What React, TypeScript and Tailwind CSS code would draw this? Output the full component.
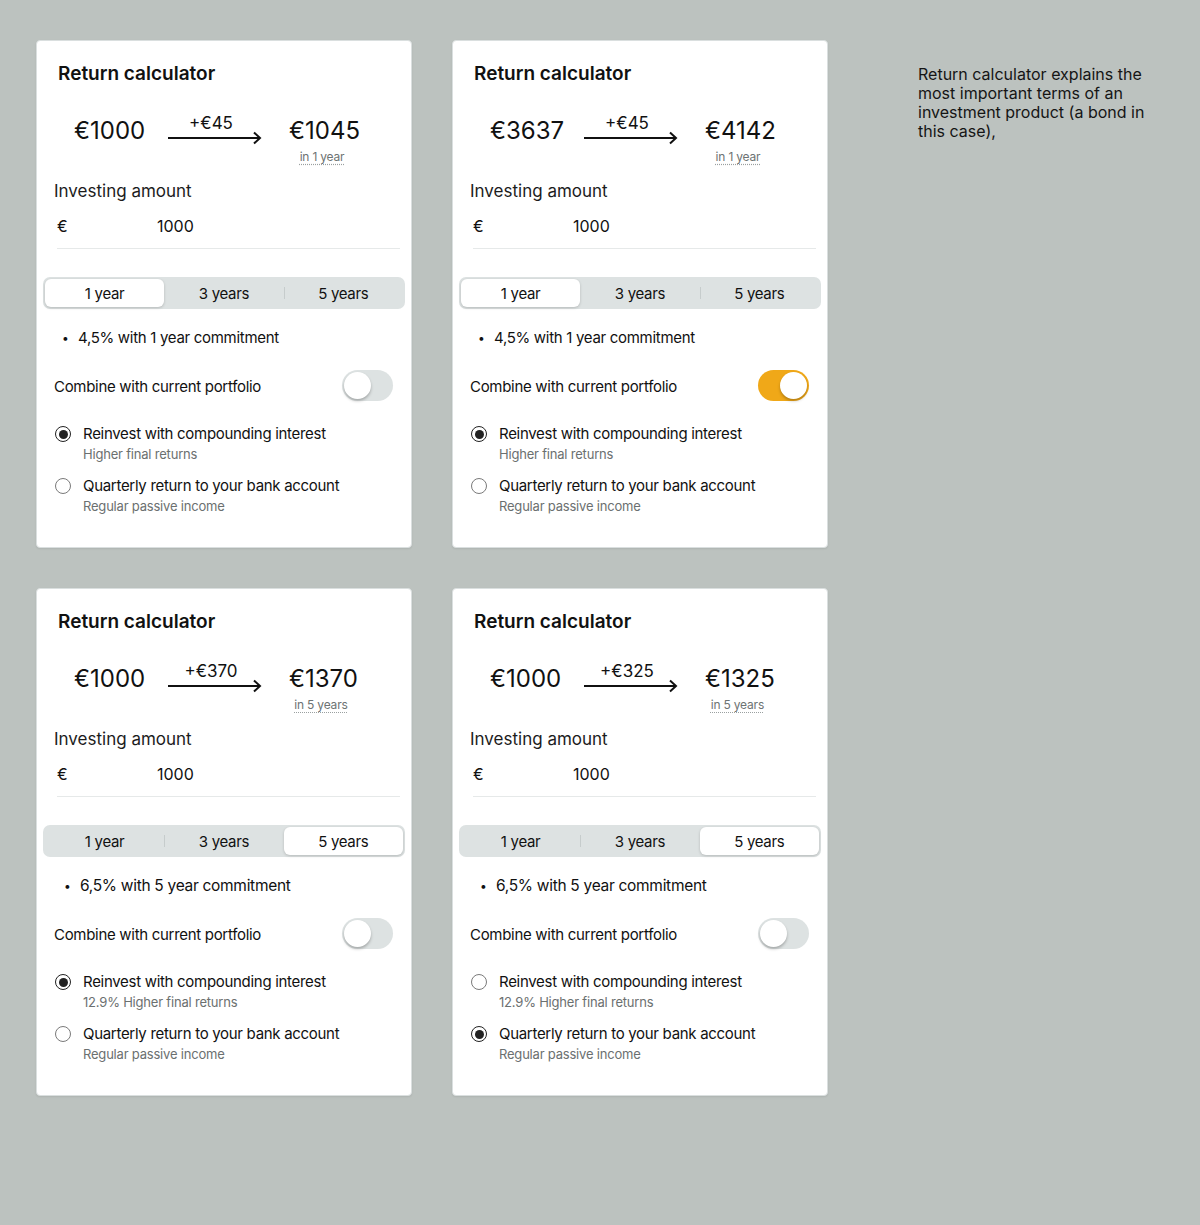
import React from "react";

type Card = {
  from: string;
  gain: string;
  to: string;
  period: string;
  tab: number;
  rate: string;
  big: boolean;
  combine: boolean;
  reinvestNote: string;
  reinvest: boolean;
};

const cards: Card[] = [
  { from: "€1000", gain: "+€45", to: "€1045", period: "in 1 year", tab: 0, rate: "4,5% with 1 year commitment", big: false, combine: false, reinvestNote: "Higher final returns", reinvest: true },
  { from: "€3637", gain: "+€45", to: "€4142", period: "in 1 year", tab: 0, rate: "4,5% with 1 year commitment", big: false, combine: true, reinvestNote: "Higher final returns", reinvest: true },
  { from: "€1000", gain: "+€370", to: "€1370", period: "in 5 years", tab: 2, rate: "6,5% with 5 year commitment", big: true, combine: false, reinvestNote: "12.9% Higher final returns", reinvest: true },
  { from: "€1000", gain: "+€325", to: "€1325", period: "in 5 years", tab: 2, rate: "6,5% with 5 year commitment", big: true, combine: false, reinvestNote: "12.9% Higher final returns", reinvest: false },
];

const tabs = ["1 year", "3 years", "5 years"];

function Radio({ on }: { on: boolean }) {
  return on ? (
    <div className="flex h-[16px] w-[16px] shrink-0 items-center justify-center rounded-full border-[1.5px] border-[#222]">
      <div className="h-[9px] w-[9px] rounded-full bg-[#222]" />
    </div>
  ) : (
    <div className="h-[16px] w-[16px] shrink-0 rounded-full border border-[#7a7a7a] bg-white" />
  );
}

function Toggle({ on }: { on: boolean }) {
  return (
    <div
      className={
        on
          ? "flex h-[31px] w-[51px] items-center justify-end rounded-full bg-[#f0a818] px-[2px]"
          : "flex h-[31px] w-[51px] items-center justify-start rounded-full bg-[#dde2e2] px-[2px]"
      }
    >
      <div className="h-[27px] w-[27px] rounded-full bg-white shadow-[0_2px_3px_rgba(0,0,0,0.25)]" />
    </div>
  );
}

function Calculator({ c }: { c: Card }) {
  return (
    <div className="flex h-[508px] flex-col rounded-[4px] border border-[#dadfdf] bg-white pl-[17px] pr-[11px] pt-[21px] shadow-[0_1px_2px_rgba(0,0,0,0.08)]">
      <h2 className="pl-[4px] text-[19px] font-semibold leading-[24px] text-[#111]">Return calculator</h2>

      {/* amounts */}
      <div className="mt-[30px] flex items-start pl-[20px]">
        <div className="w-[94px] text-[24px] leading-[30px] text-[#111]">{c.from}</div>
        <div className="flex w-[94px] flex-col items-center">
          <span className="mt-[-2px] pr-[8px] text-[17px] leading-[18px] text-[#111]">{c.gain}</span>
          <svg width="94" height="14" viewBox="0 0 94 14" className="mt-[-1px]">
            <path d="M0 7 H92" stroke="#111" strokeWidth="2" fill="none" />
            <path d="M86 1.5 L92 7 L86 12.5" stroke="#111" strokeWidth="2" fill="none" strokeLinejoin="miter" />
          </svg>
        </div>
        <div className="ml-[27px] flex flex-col items-center">
          <span className="text-[24px] leading-[30px] text-[#111]">{c.to}</span>
          <span className="mr-[5px] mt-[3px] text-[12px] leading-[16px] tracking-[-0.2px] text-[#6d7373] underline decoration-dotted decoration-[#9aa0a0] underline-offset-[3px]">
            {c.period}
          </span>
        </div>
      </div>

      {/* investing amount */}
      <div className="mt-[15px] text-[17px] leading-[22px] text-[#1c1c1c]">Investing amount</div>
      <div className="ml-[3px] mt-[14px] flex border-b border-[#e6e9e9] pb-[12px] text-[16px] leading-[20px] text-[#111]">
        <span className="w-[100px]">€</span>
        <span>1000</span>
      </div>

      {/* period tabs */}
      <div className="-ml-[11px] -mr-[5px] mt-[28px] grid h-[32px] grid-cols-3 rounded-[7px] bg-[#dde2e2] p-[2px]">
        {tabs.map((t, i) => {
          const showSep = i > 0 && c.tab !== i && c.tab !== i - 1;
          return (
            <div key={t} className="relative flex items-center justify-center">
              {showSep && <div className="absolute left-0 top-[8px] h-[12px] w-px bg-[#c6cccc]" />}
              {c.tab === i ? (
                <div className="flex h-full w-full items-center justify-center rounded-[6px] bg-white pt-[2px] text-[15px] tracking-[-0.3px] text-[#111] shadow-[0_1px_3px_rgba(0,0,0,0.18)]">
                  {t}
                </div>
              ) : (
                <span className="pt-[2px] text-[15px] tracking-[-0.3px] text-[#111]">{t}</span>
              )}
            </div>
          );
        })}
      </div>

      <div
        className={
          c.big
            ? "mt-[19px] flex items-center pl-[10px] text-[15.5px] leading-[20px] tracking-[-0.3px] text-[#111]"
            : "mt-[19px] flex items-center pl-[8px] text-[15px] leading-[20px] tracking-[-0.3px] text-[#111]"
        }
      >
        <span className="w-[16px] text-[12px]">•</span>
        <span>{c.rate}</span>
      </div>

      <div className="mr-[7px] mt-[22px] flex items-center justify-between">
        <span className="mt-[3px] text-[15px] leading-[20px] tracking-[-0.3px] text-[#111]">Combine with current portfolio</span>
        <Toggle on={c.combine} />
      </div>

      <div className="mt-[23px] flex items-start gap-[12px] pl-[1px]">
        <div className="mt-[2px]">
          <Radio on={c.reinvest} />
        </div>
        <div className="flex flex-col">
          <span className="text-[15px] leading-[20px] tracking-[-0.3px] text-[#111]">Reinvest with compounding interest</span>
          <span className="mt-[1px] text-[13px] leading-[18px] tracking-[-0.2px] text-[#6b7070]">{c.reinvestNote}</span>
        </div>
      </div>
      <div className="mt-[13px] flex items-start gap-[12px] pl-[1px]">
        <div className="mt-[2px]">
          <Radio on={!c.reinvest} />
        </div>
        <div className="flex flex-col">
          <span className="text-[15px] leading-[20px] tracking-[-0.3px] text-[#111]">Quarterly return to your bank account</span>
          <span className="mt-[1px] text-[13px] leading-[18px] tracking-[-0.2px] text-[#6b7070]">Regular passive income</span>
        </div>
      </div>
    </div>
  );
}

export default function App() {
  return (
    <div className="flex min-h-[1225px] w-full items-start bg-[#bcc2bf] pl-[36px] pt-[40px] font-['Inter',sans-serif]">
      <div className="grid w-[792px] grid-cols-[376px_376px] content-start gap-x-[40px] gap-y-[40px]">
        {cards.map((c, i) => (
          <Calculator key={i} c={c} />
        ))}
      </div>
      <p className="ml-[90px] mt-[25px] w-[240px] text-[16px] leading-[19px] text-[#151515]">
        Return calculator explains the most important terms of an investment product (a bond in this case),
      </p>
    </div>
  );
}
